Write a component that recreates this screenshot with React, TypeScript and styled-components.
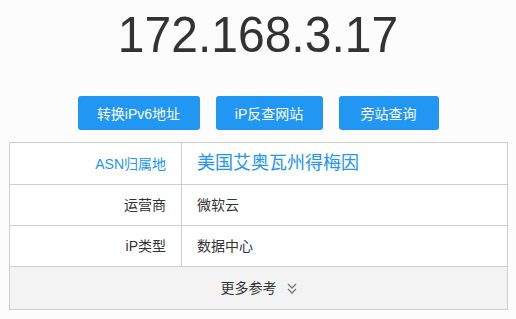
import React from "react"
import styled, { createGlobalStyle } from "styled-components"

const GlobalStyle = createGlobalStyle`
  html, body {
    margin: 0;
    padding: 0;
    background: #fcfcfc;
  }
  body {
    font-family: "Liberation Sans", "Noto Sans CJK SC", sans-serif;
    color: #333;
  }
`

const Page = styled.div`
  width: 516px;
  padding-top: 6px;
`

const Title = styled.h1`
  margin: 0;
  font-size: 48px;
  font-weight: normal;
  line-height: 57px;
  text-align: center;
  color: #333;
  transform: scaleY(1.04);
`

const Actions = styled.div`
  display: flex;
  justify-content: center;
  gap: 16px;
  margin-top: 33px;
`

const Button = styled.button<{ $w: number }>`
  width: ${p => p.$w}px;
  height: 34px;
  border: none;
  border-radius: 3px;
  background: #2196f3;
  color: #fff;
  font-family: inherit;
  font-size: 14px;
  padding: 0;
  cursor: pointer;
`

const Table = styled.table`
  margin: 12px 0 0 9px;
  width: 499px;
  border-collapse: collapse;
  background: #fff;
  font-size: 14px;

  td {
    border: 1px solid #cfcfcf;
    padding: 10px 15px;
    line-height: 20px;
  }
`

const Label = styled.td<{ $accent?: boolean }>`
  width: 141px;
  text-align: right;
  color: ${p => (p.$accent ? "#2196f3" : "#333")};
`

const Value = styled.td<{ $big?: boolean }>`
  color: ${p => (p.$big ? "#2196f3" : "#333")};
  font-size: ${p => (p.$big ? "18px" : "14px")};
  && {
    line-height: ${p => (p.$big ? "21px" : "20px")};
  }
`

const More = styled.td`
  background: #f3f3f3;
  text-align: center;
  && {
    padding: 11px 15px;
  }
`

const MoreInner = styled.span`
  display: inline-flex;
  align-items: center;
  gap: 10px;
  color: #333;
`

const rows = [
  { label: "运营商", value: "微软云" },
  { label: "iP类型", value: "数据中心" },
]

const DoubleDown = () => (
  <svg width="10" height="11" viewBox="0 0 10 11" fill="none" stroke="#777" strokeWidth="1.3">
    <path d="M1 1l4 4 4-4" />
    <path d="M1 6l4 4 4-4" />
  </svg>
)

export default function App() {
  return (
    <Page>
      <GlobalStyle />
      <Title>172.168.3.17</Title>
      <Actions>
        <Button $w={122}>转换iPv6地址</Button>
        <Button $w={107}>iP反查网站</Button>
        <Button $w={100}>旁站查询</Button>
      </Actions>
      <Table>
        <tbody>
          <tr>
            <Label $accent>ASN归属地</Label>
            <Value $big>美国艾奥瓦州得梅因</Value>
          </tr>
          {rows.map(r => (
            <tr key={r.label}>
              <Label>{r.label}</Label>
              <Value>{r.value}</Value>
            </tr>
          ))}
          <tr>
            <More colSpan={2}>
              <MoreInner>
                更多参考
                <DoubleDown />
              </MoreInner>
            </More>
          </tr>
        </tbody>
      </Table>
    </Page>
  )
}
